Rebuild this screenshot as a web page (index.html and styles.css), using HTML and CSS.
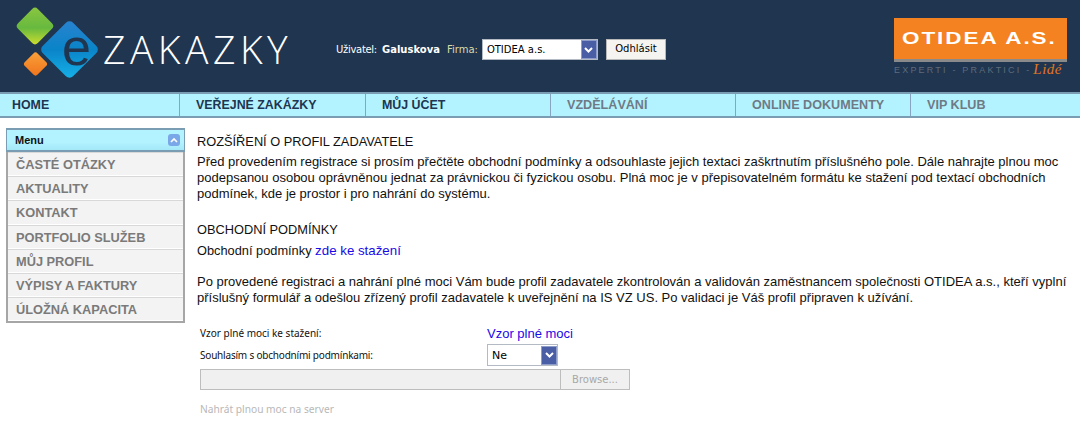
FILE: index.html
```html
<!DOCTYPE html>
<html lang="cs">
<head>
<meta charset="utf-8">
<title>eZakazky</title>
<link rel="stylesheet" href="styles.css">
</head>
<body>
<header class="top">
  <div class="logo">
    <svg class="logo-mark" width="103" height="92" viewBox="0 0 103 92">
      <defs>
        <linearGradient id="g1" x1="0" y1="0" x2="1" y2="1"><stop offset="0" stop-color="#8cc63f"/><stop offset=".55" stop-color="#67b93f"/><stop offset="1" stop-color="#d5e02c"/></linearGradient>
        <linearGradient id="g2" x1="0" y1="0" x2="1" y2="1"><stop offset="0" stop-color="#2a82d0"/><stop offset=".5" stop-color="#0a84c8"/><stop offset="1" stop-color="#16b3ea"/></linearGradient>
        <linearGradient id="g3" x1="0" y1="0" x2="1" y2="1"><stop offset="0" stop-color="#f9a23a"/><stop offset="1" stop-color="#f0731c"/></linearGradient>
      </defs>
      <rect x="21" y="12" width="28" height="28" rx="4" transform="rotate(45 35 26)" fill="url(#g1)"/>
      <rect x="48" y="28" width="43" height="43" rx="5" transform="rotate(45 69.500 49.500)" fill="url(#g2)"/>
      <rect x="26.500" y="55" width="18" height="18" rx="3" transform="rotate(45 35.500 64)" fill="url(#g3)"/>
      <text x="62" y="65" class="logo-e">e</text>
    </svg>
    <span class="logo-word">ZAKAZKY</span>
  </div>
  <div class="user">
    <span class="user-label">Uživatel:</span>
    <b class="user-name">Galuskova</b>
    <span class="user-firm">Firma:</span>
    <span class="select select-firm">OTIDEA a.s.<i class="arrow"><svg width="9" height="6" viewBox="0 0 9 6"><path d="M1 1l3.500 3.500L8 1" fill="none" stroke="#fff" stroke-width="2"/></svg></i></span>
    <span class="button">Odhlásit</span>
  </div>
  <div class="otidea">
    <div class="otidea-box"><span class="otidea-name">OTIDEA A.S.</span></div>
    <div class="otidea-tag"><span>EXPERTI - PRAKTICI -</span><em>Lidé</em></div>
  </div>
</header>
<nav class="nav">
  <a class="nav-item w1 on">HOME</a>
  <a class="nav-item w2 on">VEŘEJNÉ ZAKÁZKY</a>
  <a class="nav-item w3 on">MŮJ ÚČET</a>
  <a class="nav-item w3">VZDĚLÁVÁNÍ</a>
  <a class="nav-item w4">ONLINE DOKUMENTY</a>
  <a class="nav-item w5">VIP KLUB</a>
</nav>
<div class="page">
  <aside class="side">
    <div class="side-head"><span>Menu</span><i class="collapse"><svg width="8" height="6" viewBox="0 0 8 6"><path d="M1 5l3-3 3 3" fill="none" stroke="#fff" stroke-width="1.600"/></svg></i></div>
    <ul class="side-list">
      <li>ČASTÉ OTÁZKY</li>
      <li>AKTUALITY</li>
      <li>KONTAKT</li>
      <li>PORTFOLIO SLUŽEB</li>
      <li>MŮJ PROFIL</li>
      <li>VÝPISY A FAKTURY</li>
      <li>ÚLOŽNÁ KAPACITA</li>
    </ul>
  </aside>
  <main class="main">
    <h2 class="title">ROZŠÍŘENÍ O PROFIL ZADAVATELE</h2>
    <p class="para">Před provedením registrace si prosím přečtěte obchodní podmínky a odsouhlaste jejich textaci zaškrtnutím příslušného pole. Dále nahrajte plnou moc podepsanou osobou oprávněnou jednat za právnickou či fyzickou osobu. Plná moc je v přepisovatelném formátu ke stažení pod textací obchodních podmínek, kde je prostor i pro nahrání do systému.</p>
    <h2 class="title title2">OBCHODNÍ PODMÍNKY</h2>
    <p class="para para-link">Obchodní podmínky <a class="link">zde ke stažení</a></p>
    <p class="para para3">Po provedené registraci a nahrání plné moci Vám bude profil zadavatele zkontrolován a validován zaměstnancem společnosti OTIDEA a.s., kteří vyplní příslušný formulář a odešlou zřízený profil zadavatele k uveřejnění na IS VZ US. Po validaci je Váš profil připraven k užívání.</p>
    <div class="form">
      <div class="row row1"><span class="label">Vzor plné moci ke stažení:</span><a class="link">Vzor plné moci</a></div>
      <div class="row row2"><span class="label label-tight">Souhlasím s obchodními podmínkami:</span><span class="select select-ne">Ne<i class="arrow"><svg width="9" height="6" viewBox="0 0 9 6"><path d="M1 1l3.500 3.500L8 1" fill="none" stroke="#fff" stroke-width="2"/></svg></i></span></div>
      <div class="file"><span class="file-input"></span><span class="file-btn">Browse...</span></div>
      <div class="upload">Nahrát plnou moc na server</div>
    </div>
  </main>
</div>
</body>
</html>
```

FILE: styles.css
```css
* { box-sizing: border-box; }
html, body { margin: 0; padding: 0; }
body { width: 1080px; height: 421px; overflow: hidden; background: #fff; font-family: "Liberation Sans", Arial, sans-serif; font-size: 13px; color: #111; }

.top { height: 92px; background: #20354f; display: flex; align-items: flex-start; }
.logo { width: 336px; height: 92px; display: flex; align-items: flex-start; flex: none; }
.logo-mark { flex: none; }
.logo-e { font-family: "Liberation Sans", sans-serif; font-size: 52px; fill: #20354f; }
.logo-word { font-family: "Open Sans", "Liberation Sans", sans-serif; font-weight: 300; font-size: 39px; letter-spacing: 4.500px; color: #fff; margin: 27px 0 0 0; line-height: 44px; white-space: nowrap; }

.user { display: flex; align-items: center; width: 558px; height: 21px; margin-top: 39px; font-family: "DejaVu Sans", sans-serif; font-size: 10px; color: #fff; flex: none; }
.user-label { letter-spacing: -.3px; }
.user-name { margin-left: 5px; }
.user-firm { margin-left: 7px; color: #dcd9a8; }
.select { display: flex; align-items: center; justify-content: space-between; background: #fff; border: 1px solid #b4bac4; color: #000; font-family: "DejaVu Sans", sans-serif; font-size: 10px; padding: 0 0 0 4px; }
.select-firm { width: 116px; height: 21px; margin-left: 4px; }
.select-ne { width: 71px; height: 22px; font-size: 11px; }
.arrow { display: flex; align-items: center; justify-content: center; width: 16px; height: 19px; background: #4a5ea6; border: 1px solid #8d9cc8; }
.button { display: block; width: 60px; height: 21px; margin-left: 8px; background: #f5f4f1; border: 1px solid #b8b8b8; color: #000; font-size: 10px; text-align: center; line-height: 18px; }

.otidea { flex: none; width: 173px; margin-top: 18px; }
.otidea-box { height: 44px; background: #f58220; border-bottom: 3px solid #8a8a8a; padding-left: 8px; overflow: hidden; }
.otidea-name { display: block; color: #fff; font-weight: 700; font-size: 17px; letter-spacing: 1.500px; line-height: 41px; white-space: nowrap; transform: scaleX(1.320); transform-origin: left center; }
.otidea-tag { display: flex; align-items: center; justify-content: space-between; padding-right: 5px; height: 15px; color: #5e6b7c; font-size: 9px; letter-spacing: 2.200px; white-space: nowrap; }
.otidea-tag em { color: #e0751f; font-family: "Liberation Serif", serif; font-size: 15px; letter-spacing: .5px; }

.nav { display: flex; height: 26px; background: #b3f3ff; border-top: 2px solid #7b9db3; border-bottom: 2px solid #7b9db3; }
.nav-item { display: block; border-right: 1px solid #87a5c0; padding-left: 12px; font-weight: 700; font-size: 12.600px; line-height: 22px; color: #6f7a85; white-space: nowrap; }
.nav-item.on { color: #20354f; font-size: 12.400px; }
.w1 { width: 180px; }
.w2 { width: 186px; padding-left: 16px; }
.w3 { width: 185px; padding-left: 16px; }
.w4 { width: 175px; padding-left: 16px; }
.w5 { border-right: 0; padding-left: 16px; }

.page { display: flex; align-items: flex-start; padding: 10px 0 0 6px; }
.side { width: 179px; flex: none; border: 2px solid #a6a6a6; border-top: 0; }
.side-head { display: flex; align-items: center; justify-content: space-between; height: 24px; margin: 0 -2px; padding: 0 4px 0 8px; background: linear-gradient(#b3f3ff, #b3f3ff 60%, #a4e8f8); border-top: 2px solid #7b9db3; border-bottom: 2px solid #7b9db3; border-left: 1px solid #7b9db3; border-right: 1px solid #7b9db3; font-weight: 700; font-size: 11px; color: #111; }
.collapse { display: flex; align-items: center; justify-content: center; width: 12px; height: 12px; border-radius: 3px; background: #7aa7e8; }
.side-list { list-style: none; margin: 0; padding: 0; }
.side-list li { height: 24.200px; padding: 2px 0 0 8px; background: #f3f3f3; border-top: 1px solid #d8d8d8; border-bottom: 1px solid #fff; font-weight: 700; font-size: 12.800px; line-height: 20px; color: #7a7a7a; white-space: nowrap; }

.main { margin-left: 12px; width: 870px; }
.title { margin: 0; font-weight: 400; font-size: 12.800px; line-height: 18px; padding-top: 5px; color: #111; }
.para { margin: 0; font-size: 13px; line-height: 16px; }
.title + .para { margin-top: 3px; }
.title2 { margin-top: 14px; }
.para-link { margin-top: 4px !important; font-size: 12.800px; }
.para3 { margin-top: 15px; }
.link { color: #1a0ae6; }
.para-link .link { font-size: 13.300px; }

.form { margin-top: 16px; padding-left: 3px; }
.row { display: flex; align-items: center; }
.label { width: 287px; font-family: "Noto Sans", sans-serif; font-size: 10px; }
.label-tight { letter-spacing: -.2px; }
.row1 { height: 22px; }
.row1 .link { font-size: 13px; }
.row2 { height: 22px; }
.file { display: flex; width: 430px; height: 21px; border: 1px solid #bdbdbd; background: #f0f0f0; margin-top: 3px; }
.file-input { flex: 1; border-right: 1px solid #bdbdbd; }
.file-btn { width: 68px; text-align: center; color: #a8a8a8; font-family: "DejaVu Sans", sans-serif; font-size: 10px; line-height: 19px; }
.upload { margin-top: 12px; color: #b8b8b8; font-family: "Noto Sans", sans-serif; font-size: 10.200px; }
```
